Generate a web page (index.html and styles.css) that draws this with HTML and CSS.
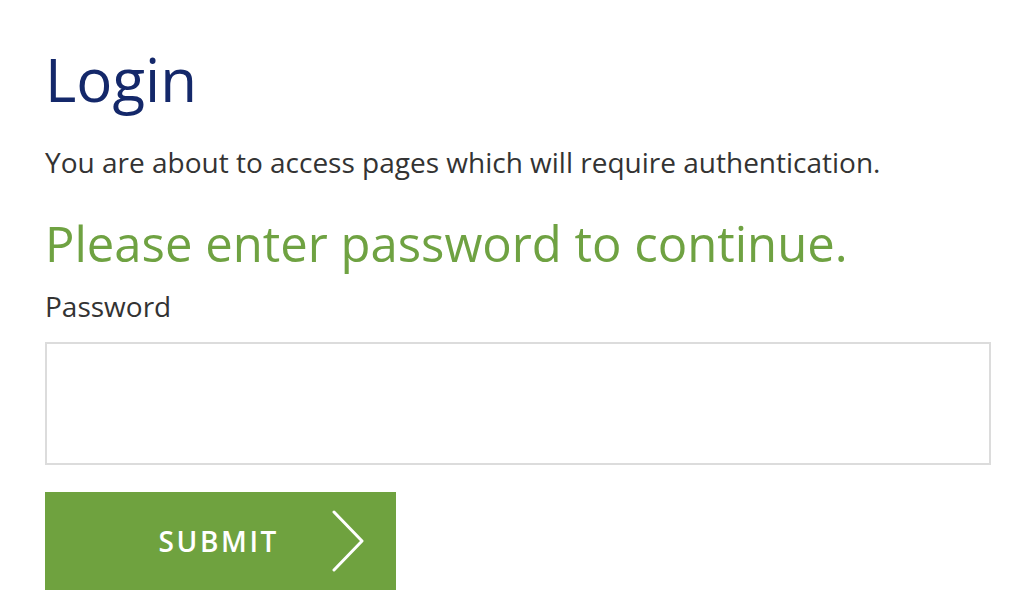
FILE: index.html
```html
<!DOCTYPE html>
<html lang="en">
<head>
    <meta charset="UTF-8">
    <meta name="viewport" content="width=device-width, initial-scale=1.0">
    <title>Login</title>
    <link rel="stylesheet" href="styles.css">
</head>
<body>

    <!-- Login form -->
    <div class="container">
        <h1 class="title">Login</h1>
        <p class="intro">You are about to access pages which will require authentication.</p>
        <h2 class="prompt">Please enter password to continue.</h2>

        <form class="login-form" onsubmit="return false;">
            <label for="password" class="label">Password</label>
            <input type="password" id="password" class="input">
            <button type="submit" class="button">
                <span class="button-text">SUBMIT</span>
                <svg class="chevron" width="34" height="62" viewBox="0 0 34 62">
                    <polyline points="3,2 31,31 3,60" fill="none" stroke="#fff" stroke-width="3" stroke-linecap="round" stroke-linejoin="round"/>
                </svg>
            </button>
        </form>
    </div>

</body>
</html>
```

FILE: styles.css
```css
body {
    font-family: "Open Sans", Arial, sans-serif;
    background-color: #fff;
    color: #333;
    margin: 0;
}

.container {
    padding: 38px 34px 0 45px;
}

.title {
    font-size: 60px;
    font-weight: normal;
    color: #14286a;
    line-height: 82px;
    margin: 0;
}

.intro {
    font-size: 28px;
    line-height: 40px;
    margin: 22px 0 0 0;
}

.prompt {
    font-size: 49px;
    font-weight: normal;
    color: #6fa242;
    line-height: 66px;
    margin: 28px 0 0 0;
}

.login-form {
    display: flex;
    flex-direction: column;
    align-items: flex-start;
    margin-top: 10px;
}

.label {
    font-size: 28px;
    line-height: 40px;
}

.input {
    box-sizing: border-box;
    width: 946px;
    height: 123px;
    border: 2px solid #dcdcdc;
    margin: 16px 0 0 0;
    padding: 0 16px;
    font-size: 24px;
}

.button {
    box-sizing: border-box;
    width: 351px;
    height: 98px;
    margin-top: 27px;
    background-color: #6fa23f;
    border: none;
    display: flex;
    align-items: center;
    justify-content: flex-end;
    padding: 0 31px 0 0;
    cursor: pointer;
    font-family: inherit;
}

.button-text {
    color: #fff;
    font-size: 28px;
    font-weight: 600;
    letter-spacing: 2.6px;
    margin-right: 52px;
}
```
